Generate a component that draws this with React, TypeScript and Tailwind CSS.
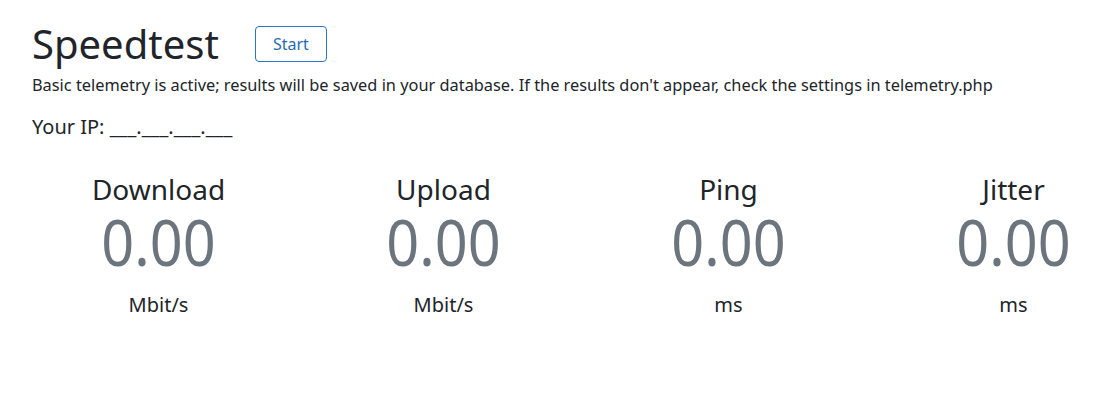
import React from 'react';

const stats = [
  { label: 'Download', value: '0.00', unit: 'Mbit/s' },
  { label: 'Upload', value: '0.00', unit: 'Mbit/s' },
  { label: 'Ping', value: '0.00', unit: 'ms' },
  { label: 'Jitter', value: '0.00', unit: 'ms' },
];

const App: React.FC = () => {
  return (
    <div className="min-h-screen overflow-hidden bg-white text-[#212529] font-['Noto_Sans',sans-serif]">
      <div className="pl-[32px] pt-[16px]">
        <div className="flex items-center gap-[36px]">
          <h1 className="text-[40px] leading-[56px] font-normal">Speedtest</h1>
          <button className="h-[36px] px-[17px] rounded-[4px] border border-[#2a78c2] text-[#1f6cb5] text-[16px]">
            Start
          </button>
        </div>
        <p className="text-[16.35px] leading-[26px]">
          Basic telemetry is active; results will be saved in your database. If the results don't appear, check the settings in telemetry.php
        </p>
        <p className="mt-[14px] text-[20px] leading-[30px]">Your IP: ___.___.___.___</p>
      </div>

      <div className="mt-[30px] flex pl-[16px]">
        {stats.map((s) => (
          <div key={s.label} className="w-[285px] shrink-0 text-center">
            <div className="text-[28px] leading-[34px]">{s.label}</div>
            <div className="mt-[1px] scale-x-[0.9] text-[64px] leading-[70px] text-[#6c757d]">{s.value}</div>
            <div className="mt-[13px] text-[20px] leading-[30px]">{s.unit}</div>
          </div>
        ))}
      </div>
    </div>
  );
};

export default App;
